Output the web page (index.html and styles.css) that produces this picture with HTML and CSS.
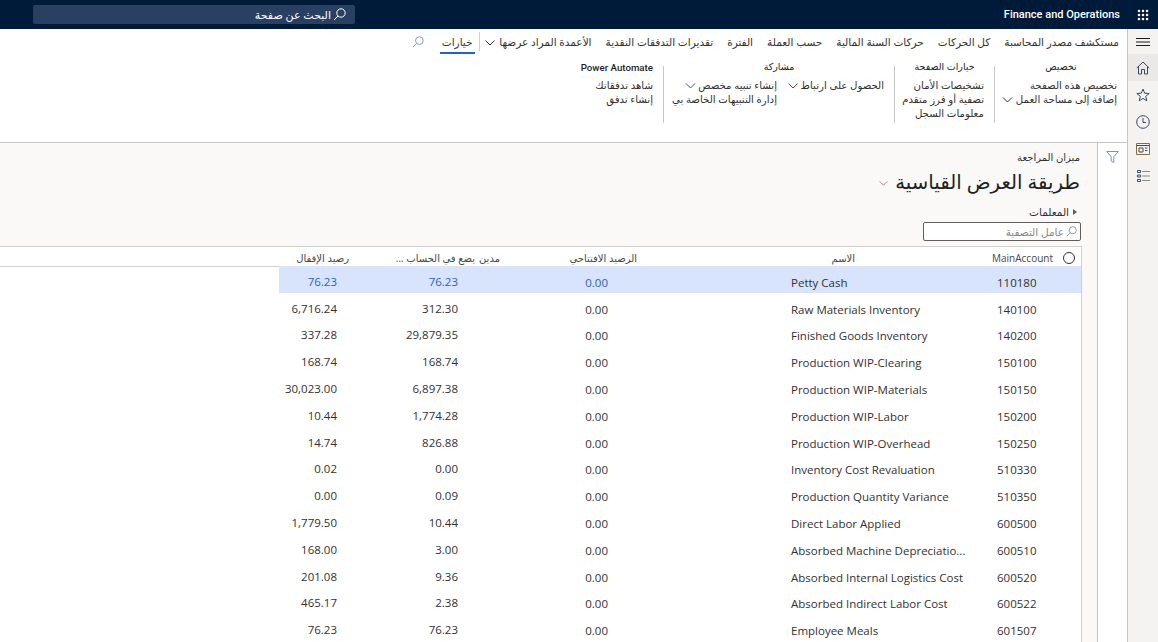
FILE: index.html
```html
<!DOCTYPE html>
<html lang="ar" dir="rtl">

<head>
  <meta charset="UTF-8" />
  <meta name="viewport" content="width=device-width, initial-scale=1.0" />
  <title>Finance and Operations</title>
  <link rel="stylesheet" href="styles.css">
</head>

<body>
  <header class="top-bar">
    <svg class="waffle" width="12" height="12" viewBox="0 0 14 14" fill="#fff">
      <rect x="1" y="1" width="2.6" height="2.6" /><rect x="5.700" y="1" width="2.6" height="2.6" /><rect x="10.400" y="1" width="2.6" height="2.6" />
      <rect x="1" y="5.700" width="2.6" height="2.6" /><rect x="5.700" y="5.700" width="2.6" height="2.6" /><rect x="10.400" y="5.700" width="2.6" height="2.6" />
      <rect x="1" y="10.400" width="2.6" height="2.6" /><rect x="5.700" y="10.400" width="2.6" height="2.6" /><rect x="10.400" y="10.400" width="2.6" height="2.6" />
    </svg>
    <span class="product">Finance and Operations</span>
    <div class="page-search">
      <svg width="13" height="13" viewBox="0 0 13 13" fill="none" stroke="#fff"><circle cx="8" cy="5" r="4.2" /><path d="M5 8 L1 12" /></svg>
      <span>البحث عن صفحة</span>
    </div>
  </header>

  <div class="shell">
    <nav class="rail">
      <div class="rail-item rail-menu">
        <svg width="14" height="8" viewBox="0 0 14 8" stroke="#1b1a19"><path d="M0 .5H14M0 4H14M0 7.5H14" /></svg>
      </div>
      <div class="rail-item rail-active">
        <svg width="14" height="14" viewBox="0 0 14 14" fill="none" stroke="#3a4a63"><path d="M.8 7 7 1l6.2 6M2.5 5.6V13h3V8.500h3V13h3V5.600" /></svg>
      </div>
      <div class="rail-item">
        <svg width="14" height="14" viewBox="0 0 14 14" fill="none" stroke="#3a4a63"><path d="M7 1l1.700 4.200 4.500.3-3.500 2.900 1.100 4.400L7 10.400l-3.800 2.400 1.100-4.400L.8 5.500l4.500-.3z" /></svg>
      </div>
      <div class="rail-item">
        <svg width="14" height="14" viewBox="0 0 14 14" fill="none" stroke="#3a4a63"><circle cx="7" cy="7" r="6.300" /><path d="M7 3v4.500h3" /></svg>
      </div>
      <div class="rail-item">
        <svg width="14" height="12" viewBox="0 0 14 12" fill="none" stroke="#3a4a63"><path stroke="#8a6d3b" d="M.5 .5h13v11H.5z" /><path d="M.5 2.500h13" /><path d="M3 5h4v4H3zM9 5h2.500M9 7.500h2.500" /></svg>
      </div>
      <div class="rail-item">
        <svg width="13" height="12" viewBox="0 0 13 12" fill="none" stroke="#3a4a63"><path d="M.5 .5h3v2h-3zM.5 5h3v2h-3zM.5 9.500h3v2h-3z" /><path stroke="#8a8886" d="M5 1.500h8M5 6h8M5 10.500h8" /></svg>
      </div>
    </nav>

    <main class="main">
      <section class="action-pane">
        <div class="tabs">
          <span class="tab">مستكشف مصدر المحاسبة</span>
          <span class="tab">كل الحركات</span>
          <span class="tab">حركات السنة المالية</span>
          <span class="tab">حسب العملة</span>
          <span class="tab">الفترة</span>
          <span class="tab">تقديرات التدفقات النقدية</span>
          <span class="tab">الأعمدة المراد عرضها
            <svg class="chev" width="10" height="6" viewBox="0 0 10 6" fill="none" stroke="#323130"><path d="M.5 .5 5 5 9.500 .5" /></svg>
          </span>
          <span class="tab-sep"></span>
          <span class="tab tab-active">خيارات</span>
          <svg class="tab-search" width="12" height="12" viewBox="0 0 13 13" fill="none" stroke="#6f94e8"><circle cx="8" cy="5" r="4.200" /><path d="M5 8 L1 12" /></svg>
        </div>

        <div class="groups">
          <div class="group group-custom">
            <h4>تخصيص</h4>
            <div class="group-items">
              <ul>
                <li>تخصيص هذه الصفحة</li>
                <li>إضافة إلى مساحة العمل
                  <svg class="chev" width="11" height="6" viewBox="0 0 10 6" fill="none" stroke="#323130"><path d="M.5 .5 5 5 9.500 .5" /></svg>
                </li>
              </ul>
            </div>
          </div>
          <div class="group group-page">
            <h4>خيارات الصفحة</h4>
            <div class="group-items">
              <ul>
                <li>تشخيصات الأمان</li>
                <li>تصفية أو فرز متقدم</li>
                <li>معلومات السجل</li>
              </ul>
            </div>
          </div>
          <div class="group group-share">
            <h4>مشاركة</h4>
            <div class="group-items">
              <ul class="share-first">
                <li>الحصول على ارتباط
                  <svg class="chev" width="10" height="6" viewBox="0 0 10 6" fill="none" stroke="#a4262c"><path d="M.5 .5 5 5 9.500 .5" /></svg>
                </li>
              </ul>
              <ul>
                <li>إنشاء تنبيه مخصص
                  <svg class="chev" width="11" height="6" viewBox="0 0 10 6" fill="none" stroke="#2b5797"><path d="M.5 .5 5 5 9.500 .5" /></svg>
                </li>
                <li>إدارة التنبيهات الخاصة بي</li>
              </ul>
            </div>
          </div>
          <div class="group group-flow">
            <h4 class="latin-title">Power Automate</h4>
            <div class="group-items">
              <ul>
                <li>شاهد تدفقاتك</li>
                <li>إنشاء تدفق</li>
              </ul>
            </div>
          </div>
        </div>
      </section>

      <section class="work-area">
        <div class="filter-col">
          <svg width="13" height="12" viewBox="0 0 13 12" fill="none" stroke="#7b93c9"><path d="M.7 .5h11.600L7.800 5.800V11.500L5.200 10V5.800z" /></svg>
        </div>
        <div class="content">
          <div class="page-head">
            <div class="crumb">ميزان المراجعة</div>
            <div class="page-title">طريقة العرض القياسية
              <svg class="chev" width="9" height="5" viewBox="0 0 10 6" fill="none" stroke="#8a6d6b"><path d="M.5 .5 5 5 9.500 .5" /></svg>
            </div>
            <div class="params"><span class="caret"></span>المعلمات</div>
            <div class="filter-box">
              <svg width="11" height="11" viewBox="0 0 13 13" fill="none" stroke="#8a8886"><circle cx="8" cy="5" r="4.200" /><path d="M5 8 L1 12" /></svg>
              <span>عامل التصفية</span>
            </div>
          </div>

          <div class="grid">
            <div class="grid-head">
              <span class="radio"></span>
              <span>MainAccount</span>
              <span>الاسم</span>
              <span>الرصيد الافتتاحي</span>
              <span>مدين</span>
              <span>يضع في الحساب ...</span>
              <span>رصيد الإقفال</span>
            </div>

            <div class="row row-selected"><span class="acc">110180</span><span class="name">Petty Cash</span><span class="num num-open">0.00</span><span class="num">76.23</span><span class="num">76.23</span></div>
            <div class="row"><span class="acc">140100</span><span class="name">Raw Materials Inventory</span><span class="num num-open">0.00</span><span class="num">312.30</span><span class="num">6,716.24</span></div>
            <div class="row"><span class="acc">140200</span><span class="name">Finished Goods Inventory</span><span class="num num-open">0.00</span><span class="num">29,879.35</span><span class="num">337.28</span></div>
            <div class="row"><span class="acc">150100</span><span class="name">Production WIP-Clearing</span><span class="num num-open">0.00</span><span class="num">168.74</span><span class="num">168.74</span></div>
            <div class="row"><span class="acc">150150</span><span class="name">Production WIP-Materials</span><span class="num num-open">0.00</span><span class="num">6,897.38</span><span class="num">30,023.00</span></div>
            <div class="row"><span class="acc">150200</span><span class="name">Production WIP-Labor</span><span class="num num-open">0.00</span><span class="num">1,774.28</span><span class="num">10.44</span></div>
            <div class="row"><span class="acc">150250</span><span class="name">Production WIP-Overhead</span><span class="num num-open">0.00</span><span class="num">826.88</span><span class="num">14.74</span></div>
            <div class="row"><span class="acc">510330</span><span class="name">Inventory Cost Revaluation</span><span class="num num-open">0.00</span><span class="num">0.00</span><span class="num">0.02</span></div>
            <div class="row"><span class="acc">510350</span><span class="name">Production Quantity Variance</span><span class="num num-open">0.00</span><span class="num">0.09</span><span class="num">0.00</span></div>
            <div class="row"><span class="acc">600500</span><span class="name">Direct Labor Applied</span><span class="num num-open">0.00</span><span class="num">10.44</span><span class="num">1,779.50</span></div>
            <div class="row"><span class="acc">600510</span><span class="name">Absorbed Machine Depreciatio...</span><span class="num num-open">0.00</span><span class="num">3.00</span><span class="num">168.00</span></div>
            <div class="row"><span class="acc">600520</span><span class="name">Absorbed Internal Logistics Cost</span><span class="num num-open">0.00</span><span class="num">9.36</span><span class="num">201.08</span></div>
            <div class="row"><span class="acc">600522</span><span class="name">Absorbed Indirect Labor Cost</span><span class="num num-open">0.00</span><span class="num">2.38</span><span class="num">465.17</span></div>
            <div class="row"><span class="acc">601507</span><span class="name">Employee Meals</span><span class="num num-open">0.00</span><span class="num">76.23</span><span class="num">76.23</span></div>
          </div>
        </div>
      </section>
    </main>
  </div>
</body>

</html>
```

FILE: styles.css
```css
* {
  box-sizing: border-box;
}

html, body {
  height: 100%;
}

body {
  margin: 0;
  overflow: hidden;
  display: flex;
  flex-direction: column;
  font-family: "Open Sans", "DejaVu Sans", sans-serif;
  font-size: 11.5px;
  color: #323130;
  background: #fff;
}

h4, ul {
  margin: 0;
  padding: 0;
  list-style: none;
}

.chev {
  vertical-align: middle;
  margin-right: 2px;
}

/* barra superior */
.top-bar {
  flex: none;
  height: 29px;
  display: flex;
  align-items: center;
  background: #001a3a;
  color: #fff;
}

.waffle {
  margin: 0 9px 0 17px;
}

.product {
  font-family: Roboto, sans-serif;
  font-size: 11px;
  font-weight: 500;
  direction: ltr;
}

.page-search {
  width: 322px;
  height: 19px;
  margin-right: auto;
  margin-left: 33px;
  padding: 0 9px;
  display: flex;
  align-items: center;
  gap: 2px;
  background: #2a4063;
  border-radius: 2px;
  font-size: 11px;
}

/* columna derecha */
.shell {
  flex: 1;
  min-height: 0;
  display: flex;
}

.rail {
  flex: none;
  width: 31px;
  background: #f5f3f2;
  border-left: 1px solid #c8c6c4;
}

.rail-item {
  height: 27px;
  display: flex;
  align-items: center;
  justify-content: center;
}

.rail-menu {
  height: 25px;
}

.rail-active {
  background: #ebe9e7;
}

.main {
  flex: 1;
  min-width: 0;
  display: flex;
  flex-direction: column;
}

/* panel de acciones */
.action-pane {
  flex: none;
  height: 114px;
  border-bottom: 1px solid #c8c6c4;
}

.tabs {
  height: 25px;
  padding: 0 8px 0 0;
  display: flex;
  align-items: center;
  gap: 14px;
  white-space: nowrap;
}

.tab {
  font-size: 10.5px;
}

.tab-sep {
  width: 1px;
  height: 19px;
  margin: 0 -9px 0 -10px;
  background: #d2d0ce;
}

.tab-active {
  height: 25px;
  line-height: 26px;
  padding: 0 2px;
  border-bottom: 2px solid #1a63d8;
}

.tab-search {
  margin-right: 2px;
}

.groups {
  display: flex;
  height: 57px;
  margin-top: 12px;
  white-space: nowrap;
  font-size: 10.2px;
}

.group {
  padding: 0 10px;
  border-left: 1px solid #c8c6c4;
}

.group:last-child {
  border-left: none;
}

.group h4 {
  height: 18px;
  margin-top: -6px;
  font-size: 9.5px;
  font-weight: 400;
  text-align: center;
  color: #201f1e;
}

.group .latin-title {
  padding-top: 2px;
  font-family: Roboto, sans-serif;
  font-size: 9.7px;
  font-weight: 500;
}

.group .chev {
  margin-right: 0;
}

.group-custom {
  width: 133px;
}

.group-page {
  width: 100px;
}

.group-share {
  width: 231px;
}

.group-flow {
  width: 92px;
}

.group-items {
  display: flex;
  gap: 12px;
}

.share-first {
  width: 95px;
}

.group-items li {
  height: 14px;
  line-height: 14px;
}

/* contenido */
.work-area {
  flex: 1;
  min-height: 0;
  display: flex;
}

.filter-col {
  flex: none;
  width: 29px;
  padding-top: 8px;
  display: flex;
  justify-content: center;
  align-items: flex-start;
}

.content {
  flex: 1;
  min-width: 0;
  display: flex;
  flex-direction: column;
  background: #faf9f8;
  border-right: 1px solid #c8c6c4;
}

.page-head {
  flex: none;
  height: 103px;
  padding: 7px 17px 0 0;
}

.crumb {
  height: 15px;
  font-size: 10px;
}

.page-title {
  height: 32px;
  line-height: 32px;
  margin-top: 1px;
  font-size: 19.7px;
  white-space: nowrap;
  color: #201f1e;
}

.params {
  height: 16px;
  margin-top: 6px;
  padding-right: 3px;
  font-size: 10.5px;
  display: flex;
  align-items: center;
  gap: 4px;
}

.caret {
  width: 0;
  height: 0;
  border-style: solid;
  border-width: 3.5px 0 3.5px 4px;
  border-color: transparent transparent transparent #605e5c;
}

.filter-box {
  width: 158px;
  height: 19px;
  margin-top: 2px;
  margin-right: -1px;
  padding: 0 3px;
  display: flex;
  align-items: center;
  gap: 2px;
  background: #fff;
  border: 1px solid #605e5c;
  border-radius: 2px;
  font-size: 10.5px;
  color: #8a8886;
}

/* tabla */
.grid {
  flex: 1;
  margin-right: 15px;
  overflow: hidden;
  background: #fff;
  border-top: 1px solid #d2d0ce;
  border-right: 1px solid #d2d0ce;
}

.grid-head {
  height: 20px;
  padding-top: 2px;
  display: grid;
  grid-template-columns: 28px 198px 218px 137px 25px 126px 1fr;
  align-items: center;
  border-bottom: 1px solid #d2d0ce;
  font-size: 10px;
  color: #484644;
  white-space: nowrap;
}

.radio {
  width: 12px;
  height: 12px;
  margin-right: 6px;
  border: 1px solid #323130;
  border-radius: 50%;
}

.row {
  height: 26.8px;
  width: 802px;
  padding-top: 6px;
  margin-top: -1px;
  margin-bottom: 1px;
  display: grid;
  grid-template-columns: 88px 206px 179px 150px 121px 58px;
  align-items: center;
  white-space: nowrap;
}

.row-selected {
  background: #d7e4fb;
}

.row-selected .num {
  color: #2f5fb5;
}

.acc {
  direction: ltr;
  text-align: left;
  padding-left: 4px;
}

.name {
  direction: ltr;
  text-align: left;
  padding-left: 4px;
  margin-right: 27px;
}

.num {
  direction: ltr;
  text-align: right;
  margin-top: -2px;
}

.num-open {
  grid-column: 4;
  margin-top: 0;
}
```
